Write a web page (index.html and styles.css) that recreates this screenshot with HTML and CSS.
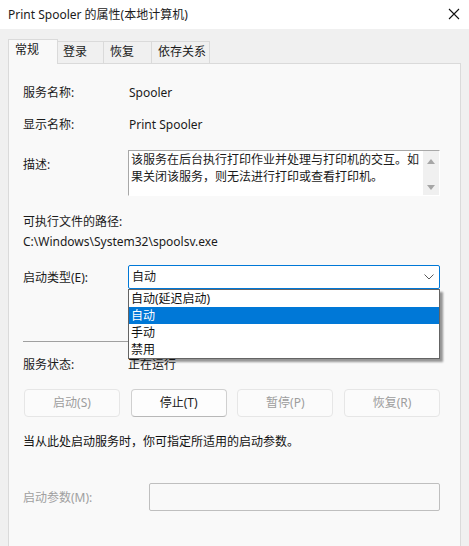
FILE: index.html
```html
<!DOCTYPE html>
<html lang="zh-CN">
<head>
<meta charset="utf-8">
<title>Print Spooler 的属性(本地计算机)</title>
<link rel="stylesheet" href="styles.css">
</head>
<body>
<div class="window">
  <div class="titlebar">
    <span class="title">Print Spooler 的属性(本地计算机)</span>
    <svg class="close" width="12" height="12" viewBox="0 0 12 12"><path d="M1 1 L11 11 M11 1 L1 11" stroke="#111" stroke-width="1.1" fill="none"/></svg>
  </div>
  <div class="tabs">
    <div class="tab active t1">常规</div>
    <div class="tab t2">登录</div>
    <div class="tab t3">恢复</div>
    <div class="tab t4">依存关系</div>
  </div>
  <div class="panel">
    <div class="row r1"><span class="label">服务名称:</span><span class="value">Spooler</span></div>
    <div class="row r2"><span class="label">显示名称:</span><span class="value">Print Spooler</span></div>
    <div class="descrow">
      <span class="label desclabel">描述:</span>
      <div class="descbox">
        <div class="desctext">该服务在后台执行打印作业并处理与打印机的交互。如<br>果关闭该服务，则无法进行打印或查看打印机。</div>
        <div class="scroll">
          <svg width="8" height="5" viewBox="0 0 8 5"><path d="M0 5 L4 0 L8 5 Z" fill="#a6a6a6"/></svg>
          <svg width="8" height="5" viewBox="0 0 8 5"><path d="M0 0 L4 5 L8 0 Z" fill="#a6a6a6"/></svg>
        </div>
      </div>
    </div>
    <div class="line pathlabel">可执行文件的路径:</div>
    <div class="line pathvalue">C:\Windows\System32\spoolsv.exe</div>
    <div class="comborow">
      <span class="label">启动类型(E):</span>
      <div class="combo">
        <span class="combotext">自动</span>
        <svg class="chev" width="10" height="6" viewBox="0 0 10 6"><path d="M0.5 0.5 L5 5 L9.5 0.5" stroke="#5a5a5a" stroke-width="1" fill="none"/></svg>
        <div class="dropdown">
          <div class="opt">自动(延迟启动)</div>
          <div class="opt sel">自动</div>
          <div class="opt">手动</div>
          <div class="opt">禁用</div>
        </div>
      </div>
    </div>
    <div class="sep"></div>
    <div class="row r3"><span class="label">服务状态:</span><span class="value status">正在运行</span></div>
    <div class="buttons">
      <div class="btn disabled">启动(S)</div>
      <div class="btn">停止(T)</div>
      <div class="btn disabled">暂停(P)</div>
      <div class="btn disabled">恢复(R)</div>
    </div>
    <div class="line note">当从此处启动服务时，你可指定所适用的启动参数。</div>
    <div class="paramrow">
      <span class="plabel">启动参数(M):</span>
      <div class="pinput"></div>
    </div>
  </div>
</div>
</body>
</html>
```
FILE: styles.css
```css
html, body {
  margin: 0;
  padding: 0;
}
body {
  width: 469px;
  height: 546px;
  overflow: hidden;
  background: #f0f0f0;
  font-family: "Noto Sans", "Noto Sans CJK SC", sans-serif;
  font-size: 12px;
  color: #1b1b1b;
}
.window {
  width: 469px;
  height: 546px;
  overflow: hidden;
}
.titlebar {
  height: 29px;
  background: #ffffff;
  display: flex;
  align-items: center;
  justify-content: space-between;
  padding: 0 9px 0 8px;
  box-sizing: border-box;
}
.title {
  font-size: 12px;
  line-height: 16px;
  color: #1b1b1b;
  padding-top: 1px;
}
.close {
  display: block;
  margin-bottom: 1px;
}
.tabs {
  height: 34px;
  display: flex;
  align-items: flex-end;
  padding-left: 8px;
}
.tab {
  box-sizing: border-box;
  height: 22px;
  line-height: 20px;
  padding-left: 5px;
  background: #f0f0f0;
  border: 1px solid #dadada;
  border-bottom: none;
  border-left: none;
  color: #1b1b1b;
}
.tab.active {
  position: relative;
  z-index: 1;
  height: 25px;
  margin-bottom: -1px;
  background: #f9f9f9;
  border-left: 1px solid #dadada;
  line-height: 20px;
  padding-left: 6px;
}
.t1 { width: 50px; }
.t2 { width: 46px; }
.t3 { width: 48px; padding-left: 6px; }
.t4 { width: 58px; padding-left: 6px; }
.panel {
  margin: 0 8px 0 8px;
  height: 500px;
  background: #f9f9f9;
  border: 1px solid #dadada;
  box-sizing: border-box;
  padding: 21px 20px 0 14px;
}
.row {
  display: flex;
  height: 16px;
  line-height: 16px;
}
.label {
  width: 105px;
  flex: none;
}
.value {
  padding-left: 1px;
}
.r2 { margin-top: 16px; }
.descrow {
  display: flex;
  align-items: flex-start;
  margin-top: 17px;
}
.desclabel {
  margin-top: 7px;
  line-height: 16px;
}
.descbox {
  flex: 1;
  height: 46px;
  box-sizing: border-box;
  display: flex;
  background: #ffffff;
  border-top: 1px solid #a8a8a8;
  border-left: 1px solid #a8a8a8;
  border-right: 1px solid #ffffff;
  border-bottom: 1px solid #ffffff;
}
.desctext {
  flex: 1;
  padding: 1px 0 0 2px;
  line-height: 16.5px;
  white-space: nowrap;
}
.scroll {
  width: 16px;
  background: #f0f0f0;
  display: flex;
  flex-direction: column;
  justify-content: space-between;
  align-items: center;
  padding: 8px 0 5px 0;
  box-sizing: border-box;
}
.scroll svg { display: block; }
.line {
  height: 16px;
  line-height: 16px;
}
.pathlabel { margin-top: 18px; }
.pathvalue { margin-top: 4px; }
.comborow {
  display: flex;
  align-items: center;
  margin-top: 15px;
  height: 24px;
}
.combo {
  position: relative;
  flex: 1;
  height: 24px;
  box-sizing: border-box;
  background: #ffffff;
  border: 1px solid #0078d7;
  border-radius: 2px;
  display: flex;
  align-items: center;
  justify-content: space-between;
  padding: 0 5px 0 3px;
}
.combotext {
  line-height: 16px;
}
.chev { display: block; }
.dropdown {
  position: absolute;
  left: -1px;
  right: -1px;
  top: calc(100% + 1px);
  z-index: 5;
  background: #ffffff;
  border: 1px solid #646464;
  box-shadow: 3px 3px 2px rgba(0, 0, 0, 0.4);
}
.opt {
  height: 17px;
  line-height: 17px;
  padding-left: 2px;
  color: #111;
}
.opt.sel {
  background: #0078d7;
  color: #ffffff;
}
.sep {
  margin-top: 52px;
  height: 1px;
  background: #a0a0a0;
}
.r3 { margin-top: 15px; }
.status { padding-left: 0; }
.buttons {
  display: flex;
  justify-content: space-between;
  margin-top: 16px;
  padding-left: 1px;
}
.btn {
  width: 96px;
  height: 28px;
  box-sizing: border-box;
  border: 1px solid #d0d0d0;
  border-bottom-color: #b8b8b8;
  border-radius: 4px;
  background: #fdfdfd;
  text-align: center;
  line-height: 26px;
  color: #1b1b1b;
}
.btn.disabled {
  border-color: #e6e6e6;
  background: #fbfbfb;
  color: #9d9d9d;
}
.note { margin-top: 17px; color: #111; }
.paramrow {
  display: flex;
  align-items: center;
  margin-top: 33px;
  height: 28px;
}
.plabel {
  width: 126px;
  flex: none;
  color: #a0a0a0;
}
.pinput {
  flex: 1;
  height: 28px;
  box-sizing: border-box;
  border: 1px solid #bfbfbf;
  border-radius: 2px;
  background: #f9f9f9;
}
```
